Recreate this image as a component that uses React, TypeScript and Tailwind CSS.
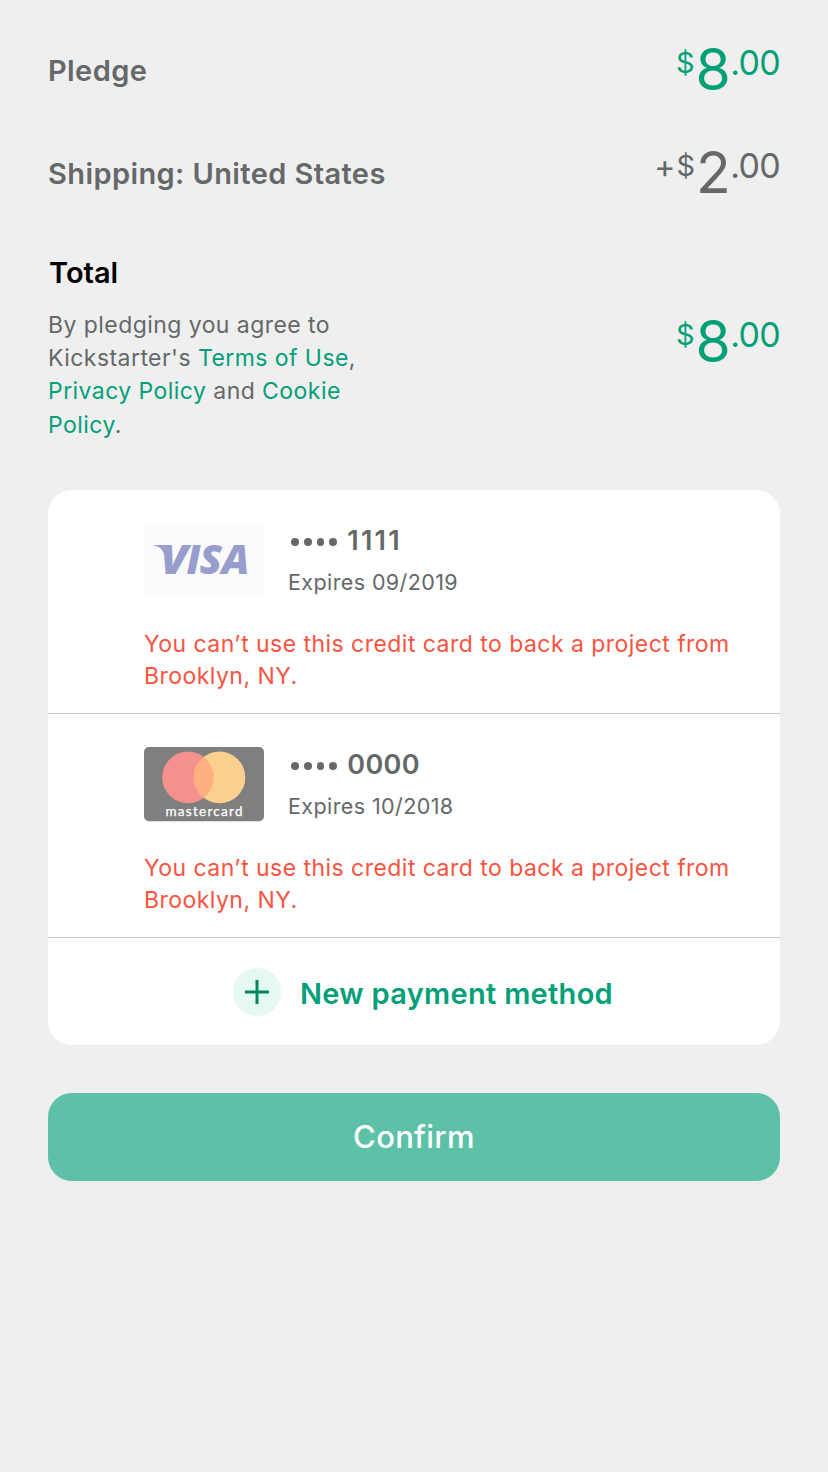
import type { ReactNode } from "react";

type PriceProps = { prefix?: string; whole: string; cents: string; className: string };

function Price({ prefix, whole, cents, className }: PriceProps) {
  return (
    <div className={`flex h-14 items-start whitespace-nowrap leading-none ${className}`}>
      {prefix && <span className="mt-[6px] mr-[1px] text-[32px] leading-none">{prefix}</span>}
      <span className="mt-[6px] mr-[1px] text-[29px] leading-none">$</span>
      <span className="-mt-px text-[57px] leading-none tracking-[-0.5px]">{whole}</span>
      <span className="mt-[4px] text-[34px] leading-none tracking-[-0.7px]">{cents}</span>
    </div>
  );
}

function Link({ children }: { children: ReactNode }) {
  return (
    <a href="#" className="text-[#03a078]">
      {children}
    </a>
  );
}

const visaLetters = [
  { letter: "V", x: 16, width: 28 },
  { letter: "I", x: 42.5, width: 14 },
  { letter: "S", x: 55.5, width: 22.5 },
  { letter: "A", x: 77.5, width: 28 },
];

function VisaLogo() {
  return (
    <svg viewBox="0 0 120 75" className="h-[75px] w-[120px] shrink-0" role="img" aria-label="Visa">
      <rect width="120" height="74" rx="5" fill="#fbfbfb" />
      <path d="M9.8 21.9H23L24 32L20.5 32C18.5 26 15 23.5 9.8 22.6Z" fill="#979dcd" />
      {visaLetters.map(({ letter, x, width }) => (
        <text
          key={letter}
          x={x}
          y="51.3"
          fontFamily="Open Sans, sans-serif"
          fontSize="41"
          fontWeight="800"
          fontStyle="italic"
          textLength={width}
          lengthAdjust="spacingAndGlyphs"
          fill="#979dcd"
        >
          {letter}
        </text>
      ))}
    </svg>
  );
}

function MastercardLogo() {
  return (
    <svg viewBox="0 0 120 75" className="h-[75px] w-[120px] shrink-0" role="img" aria-label="Mastercard">
      <rect width="120" height="74.3" rx="5" fill="#7f7f7f" />
      <circle cx="44" cy="30.4" r="25.8" fill="#f5918d" />
      <circle cx="75.5" cy="30.4" r="25.8" fill="#fbcf8e" />
      <path d="M59.75 10A25.8 25.8 0 0 1 59.75 50.8A25.8 25.8 0 0 1 59.75 10Z" fill="#ffaf80" />
      <text
        x="21.5"
        y="69"
        fontFamily="Lato, sans-serif"
        fontSize="13.5"
        fontWeight="400"
        textLength="77"
        lengthAdjust="spacing"
        fill="#ffffff"
        stroke="#ffffff"
        strokeWidth="0.25"
      >
        mastercard
      </text>
    </svg>
  );
}

type CardProps = { logo: ReactNode; digits: string; digitsClass: string; expires: string };

function PaymentCard({ logo, digits, digitsClass, expires }: CardProps) {
  return (
    <li className="h-56 border-b border-[#c7c7c7] pt-[33px] pl-24">
      <div className="flex gap-6">
        {logo}
        <div>
          <div className="flex h-9 items-center text-[27px] leading-9 font-semibold text-[#656868]">
            <span className="mr-[10px] ml-[3px] flex gap-[5px] pt-[2px]">
              {[0, 1, 2, 3].map((dot) => (
                <span key={dot} className="size-[7.8px] rounded-full bg-[#656868]" />
              ))}
            </span>
            <span className={digitsClass}>{digits}</span>
          </div>
          <p className="mt-[7px] text-[21.5px] leading-8 tracking-[0.4px] text-[#656868]">Expires {expires}</p>
        </div>
      </div>
      <p className="mt-[30px] text-[23px] leading-8 tracking-[0.46px] whitespace-nowrap text-[#fa5340]">
        You can’t use this credit card to back a project from
        <br />
        Brooklyn, NY.
      </p>
    </li>
  );
}

export default function App() {
  return (
    <main className="min-h-screen bg-[#efefef] px-12 pt-[42px] font-['Inter',sans-serif]">
      <section className="flex h-[103px] items-start justify-between">
        <h2 className="mt-[11px] text-[29px] leading-9 font-semibold tracking-[0.4px] text-[#656868]">Pledge</h2>
        <Price whole="8" cents=".00" className="text-[#03a078]" />
      </section>
      <section className="flex h-[103px] items-start justify-between">
        <h2 className="mt-[11px] text-[29px] leading-9 font-semibold tracking-[0.4px] text-[#656868]">
          Shipping: United States
        </h2>
        <Price prefix="+" whole="2" cents=".00" className="text-[#656868]" />
      </section>
      <section className="flex h-[242px] items-start justify-between">
        <div className="mt-[7px]">
          <h2 className="ml-px text-[29px] leading-9 font-semibold text-black">Total</h2>
          <p className="mt-[18px] text-[23px] leading-[33.2px] tracking-[0.44px] whitespace-nowrap text-[#656868]">
            By pledging you agree to
            <br />
            Kickstarter's <Link>Terms of Use</Link>,
            <br />
            <Link>Privacy Policy</Link> and <Link>Cookie</Link>
            <br />
            <Link>Policy</Link>.
          </p>
        </div>
        <div className="mt-[66px]">
          <Price whole="8" cents=".00" className="text-[#03a078]" />
        </div>
      </section>
      <section className="h-[555px] overflow-hidden rounded-3xl bg-white">
        <ul>
          <PaymentCard logo={<VisaLogo />} digits="1111" digitsClass="tracking-[2.3px]" expires="09/2019" />
          <PaymentCard logo={<MastercardLogo />} digits="0000" digitsClass="tracking-[0.4px]" expires="10/2018" />
        </ul>
        <button className="flex h-[107px] w-full items-start pt-[30px] pl-[185px] text-[#03a078]">
          <span className="flex size-12 items-center justify-center rounded-full bg-[#e6f9f1]">
            <svg viewBox="0 0 24 24" className="size-6" stroke="#028858" strokeWidth="3">
              <path d="M12 0V24M0 12H24" />
            </svg>
          </span>
          <span className="mt-[8px] ml-[19px] text-[29px] leading-9 font-semibold tracking-[0.3px] whitespace-nowrap">
            New payment method
          </span>
        </button>
      </section>
      <button className="mt-12 flex h-[88px] w-full items-center justify-center rounded-3xl bg-[#5cc1a7] text-[31px] leading-10 font-medium tracking-[0.3px] text-white">
        Confirm
      </button>
    </main>
  );
}
